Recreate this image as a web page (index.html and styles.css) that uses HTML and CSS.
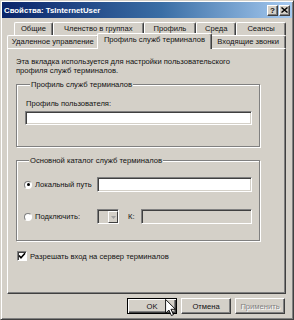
FILE: index.html
```html
<!DOCTYPE html>
<html>
<head>
<meta charset="utf-8">
<link rel="stylesheet" href="styles.css">
</head>
<body>
<div class="window">
  <div class="titlebar">
    <span class="title">Свойства: TsInternetUser</span>
    <div class="tbtns">
      <span class="tbtn">?</span>
      <span class="tbtn">
        <svg width="7" height="6" viewBox="0 0 7 6"><path d="M0.5 0.5 L6.5 5.5 M6.5 0.5 L0.5 5.5" stroke="#000" stroke-width="1.4"/></svg>
      </span>
    </div>
  </div>
  <div class="client">
    <div class="tabs">
      <div class="tabrow row1">
        <div class="tab w-gen">Общие</div>
        <div class="tab w-mem">Членство в группах</div>
        <div class="tab w-prof">Профиль</div>
        <div class="tab w-env">Среда</div>
        <div class="tab w-sess">Сеансы</div>
      </div>
      <div class="tabrow row2">
        <div class="tab w-rem">Удаленное управление</div>
        <div class="tab w-ts active">Профиль служб терминалов</div>
        <div class="tab w-dial">Входящие звонки</div>
      </div>
    </div>
    <div class="panel">
      <p class="desc">Эта вкладка используется для настройки пользовательского<br>профиля служб терминалов.</p>
      <div class="group g1">
        <span class="legend">Профиль служб терминалов</span>
        <div class="label">Профиль пользователя:</div>
        <div class="input full"></div>
      </div>
      <div class="group g2">
        <span class="legend">Основной каталог служб терминалов</span>
        <div class="row first">
          <span class="radio checked"></span>
          <span class="rlabel">Локальный путь</span>
          <div class="input grow"></div>
        </div>
        <div class="row second">
          <span class="radio"></span>
          <span class="rlabel">Подключить:</span>
          <div class="combo"><span class="combo-btn"><svg width="5" height="3" viewBox="0 0 5 3"><path d="M0 0 H5 L2.5 3 Z" fill="#a0a0a0"/></svg></span></div>
          <span class="k">К:</span>
          <div class="input grow disabled"></div>
        </div>
      </div>
      <div class="check-row">
        <span class="checkbox"><svg width="8" height="8" viewBox="0 0 8 8"><path d="M1 3.5 L3 5.8 L7 1.2" stroke="#000" stroke-width="1.6" fill="none"/></svg></span>
        <span>Разрешать вход на сервер терминалов</span>
      </div>
    </div>
    <div class="buttons">
      <span class="btn default">OK</span>
      <span class="btn">Отмена</span>
      <span class="btn dis">Применить</span>
    </div>
  </div>
  <svg class="cursor" width="11" height="17" viewBox="0 0 12 19"><path d="M0.5 0.5 V16 L4.2 12.3 L7 18.5 L9.3 17.5 L6.5 11.5 H11.5 Z" fill="#fff" stroke="#000" stroke-width="1"/></svg>
</div>
</body>
</html>
```

FILE: styles.css
```css
html, body {
  margin: 0;
  padding: 0;
  background: #d4d0c8;
}
body {
  font-family: "Liberation Sans", Arial, sans-serif;
  font-size: 7.6px;
  color: #111;
}
.window {
  position: relative;
  width: 294px;
  height: 320px;
  box-sizing: border-box;
  background: #d4d0c8;
  border-left: 1px solid #d4d0c8;
  border-top: 1px solid #d4d0c8;
  border-right: 1px solid #404040;
  border-bottom: 1px solid #404040;
  box-shadow: inset 1px 1px 0 #fff, inset -1px -1px 0 #808080;
  padding: 1px;
  display: flex;
  flex-direction: column;
}
.titlebar {
  height: 16px;
  background: linear-gradient(to right, #0a246a 0%, #3a6ea5 55%, #a6caf0 100%);
  display: flex;
  align-items: center;
  justify-content: space-between;
  padding-left: 2px;
}
.title {
  color: #fff;
  font-weight: bold;
  font-size: 7.8px;
}
.tbtns {
  display: flex;
  gap: 1px;
  margin-right: 2px;
}
.tbtn {
  width: 11px;
  height: 11px;
  box-sizing: border-box;
  background: #d4d0c8;
  border-top: 1px solid #fff;
  border-left: 1px solid #fff;
  border-right: 1px solid #404040;
  border-bottom: 1px solid #404040;
  box-shadow: inset -1px -1px 0 #808080;
  display: flex;
  align-items: center;
  justify-content: center;
  font-weight: bold;
  font-size: 8px;
  line-height: 9px;
}
.client {
  flex: 1;
  display: flex;
  flex-direction: column;
  padding: 4px 6px 0 5px;
}
.tabs {
  display: flex;
  flex-direction: column;
}
.tabrow {
  display: flex;
  height: 13px;
}
.row1 {
  padding-left: 7px;
}
.tab {
  position: relative;
  box-sizing: border-box;
  height: 13px;
  border-top: 1px solid #fff;
  border-left: 1px solid #fff;
  border-right: 1px solid #404040;
  border-radius: 2px 2px 0 0;
  box-shadow: inset -1px 0 0 #808080;
  text-align: center;
  line-height: 11px;
  background: #d4d0c8;
  white-space: nowrap;
}
.w-gen { width: 39px; }
.w-mem { width: 91px; }
.w-prof { width: 53px; }
.w-env { width: 40px; }
.w-sess { width: 50px; }
.w-rem { width: 92px; }
.w-ts { width: 112px; }
.w-dial { width: 76px; }
.row2 .tab {
  line-height: 12px;
}
.tab.active {
  z-index: 2;
  height: 16px;
  margin: -2px -2px 0;
  width: 116px;
  line-height: 12px;
}
.panel {
  position: relative;
  z-index: 1;
  height: 246px;
  box-sizing: border-box;
  border-top: 1px solid #fff;
  border-left: 1px solid #fff;
  border-right: 1px solid #404040;
  border-bottom: 1px solid #404040;
  box-shadow: inset -1px -1px 0 #808080;
  padding: 8px 25px 0 8px;
  display: flex;
  flex-direction: column;
}
.desc {
  margin: 0;
  line-height: 9px;
}
.group {
  display: flex;
  flex-direction: column;
  border: 1px solid #808080;
  box-shadow: inset 1px 1px 0 #fff, 1px 1px 0 #fff;
}
.legend {
  align-self: flex-start;
  background: #d4d0c8;
  line-height: 9px;
  margin: -5px 0 0 5px;
  padding: 0 1px;
}
.g1 {
  margin-top: 9px;
  padding: 0 7px 21px 8px;
}
.label {
  margin-top: 10px;
  margin-left: 1px;
  line-height: 9px;
}
.input {
  box-sizing: border-box;
  height: 14px;
  background: #fff;
  border-top: 1px solid #808080;
  border-left: 1px solid #808080;
  border-right: 1px solid #fff;
  border-bottom: 1px solid #fff;
  box-shadow: inset 1px 1px 0 #404040, inset -1px -1px 0 #d4d0c8;
}
.g1 .input {
  margin-top: 3px;
}
.g2 {
  margin-top: 13px;
  padding: 0 7px 16px 7px;
}
.row {
  display: flex;
  align-items: center;
  height: 15px;
}
.row.first {
  margin-top: 12px;
}
.row.second {
  margin-top: 17px;
}
.row .input {
  height: 15px;
}
.grow {
  flex: 1;
}
.input.disabled {
  background: #d4d0c8;
}
.radio {
  width: 8px;
  height: 8px;
  box-sizing: border-box;
  border-radius: 50%;
  background: #fff;
  border-top: 1px solid #808080;
  border-left: 1px solid #808080;
  border-right: 1px solid #fff;
  border-bottom: 1px solid #fff;
  display: flex;
  align-items: center;
  justify-content: center;
}
.radio.checked::after {
  content: "";
  width: 3px;
  height: 3px;
  border-radius: 50%;
  background: #000;
}
.rlabel {
  width: 62px;
  margin-left: 3px;
}
.combo {
  box-sizing: border-box;
  width: 22px;
  height: 15px;
  background: #d4d0c8;
  border-top: 1px solid #808080;
  border-left: 1px solid #808080;
  border-right: 1px solid #fff;
  border-bottom: 1px solid #fff;
  box-shadow: inset 1px 1px 0 #404040;
  display: flex;
  justify-content: flex-end;
  padding: 1px 0 0 1px;
}
.combo-btn {
  box-sizing: border-box;
  width: 10px;
  height: 12px;
  border-top: 1px solid #fff;
  border-left: 1px solid #fff;
  border-right: 1px solid #404040;
  border-bottom: 1px solid #404040;
  display: flex;
  align-items: center;
  justify-content: center;
}
.k {
  width: 13px;
  margin-left: 9px;
}
.check-row {
  display: flex;
  align-items: center;
  margin-top: 10px;
  margin-left: 1px;
  gap: 3px;
}
.checkbox {
  box-sizing: border-box;
  width: 10px;
  height: 10px;
  background: #fff;
  border-top: 1px solid #808080;
  border-left: 1px solid #808080;
  border-right: 1px solid #fff;
  border-bottom: 1px solid #fff;
  box-shadow: inset 1px 1px 0 #404040;
  display: flex;
  align-items: center;
  justify-content: center;
}
.buttons {
  display: flex;
  justify-content: flex-end;
  gap: 4px;
  margin-top: 4px;
  padding-right: 1px;
}
.btn {
  box-sizing: border-box;
  width: 50px;
  height: 16px;
  display: flex;
  align-items: center;
  justify-content: center;
  background: #d4d0c8;
  border-top: 1px solid #fff;
  border-left: 1px solid #fff;
  border-right: 1px solid #404040;
  border-bottom: 1px solid #404040;
  box-shadow: inset -1px -1px 0 #808080;
}
.btn.default {
  border: 1px solid #000;
  box-shadow: inset 1px 1px 0 #fff, inset -1px -1px 0 #404040, inset -2px -2px 0 #808080;
}
.btn.dis {
  color: #808080;
  text-shadow: 1px 1px 0 #fff;
}
.cursor {
  position: absolute;
  left: 164px;
  top: 298px;
}
```
